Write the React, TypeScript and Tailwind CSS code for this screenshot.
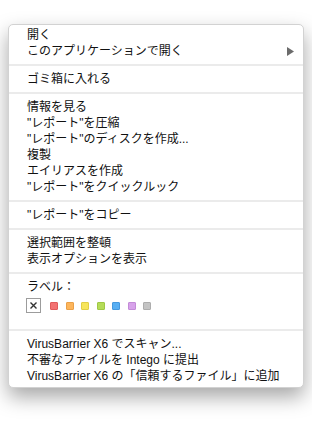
import React from "react";

type Entry = { label: string; submenu?: boolean } | "sep" | "labels";

const sections: Entry[] = [
  { label: "開く" },
  { label: "このアプリケーションで開く", submenu: true },
  "sep",
  { label: "ゴミ箱に入れる" },
  "sep",
  { label: "情報を見る" },
  { label: '"レポート"を圧縮' },
  { label: '"レポート"のディスクを作成...' },
  { label: "複製" },
  { label: "エイリアスを作成" },
  { label: '"レポート"をクイックルック' },
  "sep",
  { label: '"レポート"をコピー' },
  "sep",
  { label: "選択範囲を整頓" },
  { label: "表示オプションを表示" },
  "sep",
  "labels",
  "sep",
  { label: "VirusBarrier X6 でスキャン..." },
  { label: "不審なファイルを Intego に提出" },
  { label: "VirusBarrier X6 の「信頼するファイル」に追加" },
];

const swatches = [
  "bg-[#f37171] border-[#e05a5a]",
  "bg-[#fdb55b] border-[#eaa048]",
  "bg-[#f7e55b] border-[#e2cf45]",
  "bg-[#b5dc58] border-[#9fc845]",
  "bg-[#58aff3] border-[#4598de]",
  "bg-[#d7a2ea] border-[#c38bd8]",
  "bg-[#c4c4c4] border-[#adadad]",
];

function Separator() {
  return <div className="my-[5px] h-[2px] bg-[#ebebeb]" />;
}

function LabelPicker() {
  return (
    <div className="pb-[11px]">
      <div className="h-4 pl-[18px] leading-4">ラベル：</div>
      <div className="mt-[3px] flex items-center pl-[17px]">
        <div className="flex h-[15px] w-[15px] items-center justify-center border border-[#9c9c9c] bg-white">
          <svg width="7" height="7" viewBox="0 0 7 7">
            <path d="M0.5 0.5L6.5 6.5M6.5 0.5L0.5 6.5" stroke="#333" strokeWidth="1.4" />
          </svg>
        </div>
        <div className="ml-[9px] flex gap-[7.5px]">
          {swatches.map((c) => (
            <div key={c} className={`h-[8px] w-[8px] rounded-[1px] border ${c}`} />
          ))}
        </div>
      </div>
    </div>
  );
}

export default function App() {
  return (
    <div
      className="min-h-[426px] bg-white pt-[24px] pl-[8px] text-[12px] text-[#111]"
      style={{ fontFamily: '"Liberation Sans", "Noto Sans CJK JP", sans-serif' }}
    >
      <div className="w-[296px] rounded-[5px] border border-[#d2d2d2] bg-white pt-[2px] pb-[3px] shadow-[0_9px_20px_rgba(0,0,0,0.35)]">
        {sections.map((s, i) => {
          if (s === "sep") return <Separator key={i} />;
          if (s === "labels") return <LabelPicker key={i} />;
          return (
            <div key={i} className="flex h-4 items-center justify-between pl-[18px] pr-[9px] leading-4">
              <span>{s.label}</span>
              {s.submenu && (
                <svg width="7" height="9" viewBox="0 0 7 9">
                  <path d="M0 0L7 4.5L0 9Z" fill="#6b6b6b" />
                </svg>
              )}
            </div>
          );
        })}
      </div>
    </div>
  );
}
